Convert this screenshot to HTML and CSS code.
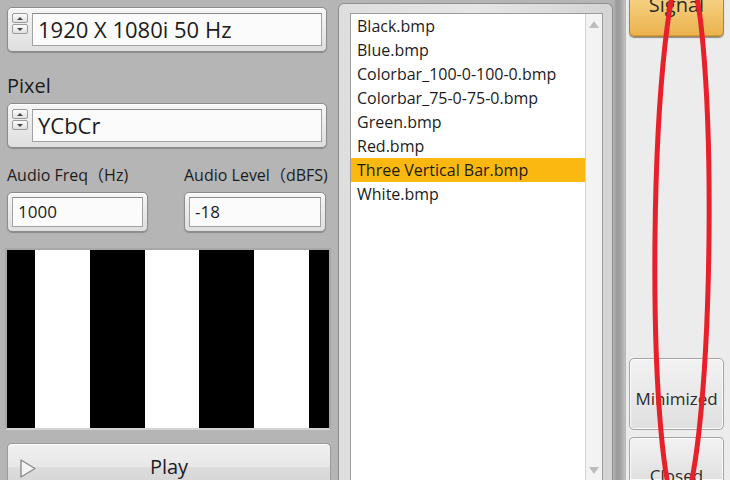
FILE: index.html
```html
<!DOCTYPE html>
<html lang="en">
<head>
    <meta charset="UTF-8">
    <meta name="viewport" content="width=device-width, initial-scale=1.0">
    <title>Signal Generator</title>
    <link rel="stylesheet" href="styles.css">
</head>
<body>

    <div class="left-panel">
        <div class="spin-field">
            <div class="spinner">
                <div class="spin-btn"><span class="tri-up"></span></div>
                <div class="spin-btn"><span class="tri-down"></span></div>
            </div>
            <div class="text-box">1920 X 1080i 50 Hz</div>
        </div>

        <div class="label">Pixel</div>
        <div class="spin-field second">
            <div class="spinner">
                <div class="spin-btn"><span class="tri-up"></span></div>
                <div class="spin-btn"><span class="tri-down"></span></div>
            </div>
            <div class="text-box">YCbCr</div>
        </div>

        <div class="audio-grid">
            <div class="small-label">Audio Freq（Hz)</div>
            <div class="small-label">Audio Level（dBFS)</div>
            <div class="num-field"><div class="num-box">1000</div></div>
            <div class="num-field"><div class="num-box">-18</div></div>
        </div>

        <div class="preview">
            <div class="bar black" style="width: 28px"></div>
            <div class="bar white" style="width: 55px"></div>
            <div class="bar black" style="width: 55px"></div>
            <div class="bar white" style="width: 54px"></div>
            <div class="bar black" style="width: 55px"></div>
            <div class="bar white" style="width: 55px"></div>
            <div class="bar black" style="width: 20px"></div>
        </div>

        <div class="play-btn">
            <svg class="play-icon" width="16" height="19" viewBox="0 0 16 19">
                <path d="M1 1 L15 9.5 L1 18 Z" fill="#f4f4f4" stroke="#8c8c8c" stroke-width="1.4" stroke-linejoin="round"/>
            </svg>
            <span class="play-text">Play</span>
        </div>
    </div>

    <div class="list-col">
        <div class="list-frame">
            <div class="file-list">
                <div class="items">
                    <div class="item">Black.bmp</div>
                    <div class="item">Blue.bmp</div>
                    <div class="item">Colorbar_100-0-100-0.bmp</div>
                    <div class="item">Colorbar_75-0-75-0.bmp</div>
                    <div class="item">Green.bmp</div>
                    <div class="item">Red.bmp</div>
                    <div class="item selected">Three Vertical Bar.bmp</div>
                    <div class="item">White.bmp</div>
                </div>
                <div class="scrollbar">
                    <span class="arrow-up"></span>
                    <span class="arrow-down"></span>
                </div>
            </div>
        </div>
    </div>

    <div class="splitter"></div>

    <div class="right-panel">
        <div class="btn signal">Signal</div>
        <div class="btn minimized">Minimized</div>
        <div class="btn closed">Closed</div>
    </div>

    <svg class="annotation" width="730" height="480" viewBox="0 0 730 480">
        <ellipse cx="682" cy="238" rx="27" ry="272" transform="rotate(0.6 682 238)" fill="none" stroke="#e8202a" stroke-width="5"/>
    </svg>

</body>
</html>
```

FILE: styles.css
```css
body {
    margin: 0;
    width: 730px;
    height: 480px;
    overflow: hidden;
    display: flex;
    position: relative;
    font-family: "Open Sans", "Noto Sans CJK SC", sans-serif;
    color: #1c1c1c;
    background: #b5b5b5;
}

/* left column */
.left-panel {
    width: 338px;
    height: 480px;
    overflow: hidden;
    flex-shrink: 0;
    box-sizing: border-box;
    padding: 7px 7px 0 7px;
    background: #b5b5b5;
}

.spin-field {
    width: 320px;
    height: 45px;
    box-sizing: border-box;
    border: 1px solid #8c8c8c;
    border-radius: 5px;
    background: linear-gradient(#f6f6f6, #dedede);
    box-shadow: inset 0 1px 0 #ffffff, 0 1px 1px #8a8a8a;
    padding: 5px 4px;
    display: flex;
    align-items: flex-start;
    gap: 4px;
}

.spin-field.second {
    margin-top: 5px;
}

.spinner {
    width: 16px;
    height: 21px;
    display: flex;
    flex-direction: column;
    gap: 1px;
}

.spin-btn {
    flex: 1;
    border: 1px solid #9a9a9a;
    border-radius: 2px;
    background: linear-gradient(#fbfbfb, #e2e2e2);
    display: flex;
    align-items: center;
    justify-content: center;
}

.tri-up,
.tri-down {
    width: 0;
    height: 0;
    border-left: 3px solid transparent;
    border-right: 3px solid transparent;
}

.tri-up {
    border-bottom: 3px solid #444;
}

.tri-down {
    border-top: 3px solid #444;
}

.text-box {
    flex: 1;
    height: 33px;
    box-sizing: border-box;
    border: 1px solid #a2a2a2;
    border-top-color: #8a8a8a;
    background: #fbfbfb;
    padding-left: 5px;
    font-size: 22px;
    line-height: 31px;
    white-space: nowrap;
}

.label {
    margin-top: 22px;
    font-size: 20px;
    line-height: 24px;
}

.audio-grid {
    margin-top: 17px;
    display: grid;
    grid-template-columns: 141px 142px;
    column-gap: 36px;
    row-gap: 7px;
}

.small-label {
    font-size: 16px;
    line-height: 20px;
    white-space: nowrap;
}

.num-field {
    height: 40px;
    box-sizing: border-box;
    border: 1px solid #8c8c8c;
    border-radius: 5px;
    background: linear-gradient(#f6f6f6, #dedede);
    box-shadow: inset 0 1px 0 #ffffff, 0 1px 1px #8a8a8a;
    padding: 4px;
}

.num-box {
    height: 30px;
    box-sizing: border-box;
    border: 1px solid #a2a2a2;
    border-top-color: #8a8a8a;
    background: #fbfbfb;
    padding-left: 5px;
    font-size: 17px;
    line-height: 28px;
}

.preview {
    margin-top: 16px;
    margin-left: -2px;
    width: 326px;
    height: 182px;
    box-sizing: border-box;
    border: 2px solid #a8a8a8;
    border-bottom-color: #d2d2d2;
    display: flex;
}

.bar.black {
    background: #000;
}

.bar.white {
    background: #fff;
}

.play-btn {
    margin-top: 13px;
    width: 324px;
    height: 37px;
    box-sizing: border-box;
    border: 1px solid #9a9a9a;
    border-bottom: none;
    border-radius: 5px 5px 0 0;
    background: linear-gradient(#f0f0f0 0%, #e8e8e8 62%, #dcdcdc 66%, #d8d8d8 100%);
    box-shadow: inset 0 1px 0 #ffffff;
    padding: 12px 12px 0 12px;
    display: grid;
    grid-template-columns: 1fr auto 1fr;
    align-items: start;
}

.play-icon {
    margin-top: 3px;
}

.play-text {
    font-size: 20px;
    line-height: 24px;
    margin-top: -1px;
}

/* file list */
.list-col {
    width: 275px;
    flex-shrink: 0;
    padding-top: 3px;
    display: flex;
    background: #b5b5b5;
}

.list-frame {
    flex: 1;
    border: 1px solid #8e8e8e;
    border-bottom: none;
    border-radius: 6px 6px 0 0;
    background: linear-gradient(to right, #dedede, #e6e6e6 50%, #d4d4d4);
    padding: 9px 9px 0 11px;
}

.file-list {
    height: 467px;
    box-sizing: border-box;
    border: 1px solid #9c9c9c;
    border-bottom: none;
    background: #fff;
    display: flex;
}

.items {
    flex: 1;
}

.item {
    height: 24px;
    padding-left: 6px;
    font-size: 16px;
    line-height: 24px;
    white-space: nowrap;
}

.item.selected {
    background: #fbb811;
}

.scrollbar {
    width: 17px;
    box-sizing: border-box;
    border-left: 1px solid #d4d4d4;
    background: #f3f3f3;
    display: flex;
    flex-direction: column;
    justify-content: space-between;
    align-items: center;
    padding: 7px 0 6px 0;
}

.arrow-up,
.arrow-down {
    width: 0;
    height: 0;
    border-left: 5px solid transparent;
    border-right: 5px solid transparent;
}

.arrow-up {
    border-bottom: 7px solid #bdbdbd;
}

.arrow-down {
    border-top: 7px solid #bdbdbd;
}

.splitter {
    width: 12px;
    flex-shrink: 0;
    background: linear-gradient(to right, #b4b4b4 0%, #9c9c9c 30%, #a0a0a0 60%, #c2c2c2 100%);
}

/* right buttons */
.right-panel {
    flex: 1;
    height: 480px;
    overflow: hidden;
    background: #ececec;
    border-left: 1px solid #b8b8b8;
    padding-left: 3px;
    display: flex;
    flex-direction: column;
}

.btn {
    width: 95px;
    flex-shrink: 0;
    box-sizing: border-box;
    border: 1px solid #a4a4a4;
    border-radius: 5px;
    background: linear-gradient(#f2f2f2, #e0e0e0);
    box-shadow: inset 0 0 0 1px #fafafa;
    text-align: center;
    font-size: 17px;
    line-height: 24px;
    color: #2c2c2c;
}

.btn.signal {
    margin-top: -10px;
    height: 47px;
    padding-top: 2px;
    font-size: 20px;
    border-color: #a88848;
    background: linear-gradient(#f7d78e, #ebb24c);
    box-shadow: inset 0 -1px 0 #d89a30, 0 1px 1px #8a8a8a;
}

.btn.minimized {
    margin-top: 321px;
    height: 72px;
    padding-top: 28px;
}

.btn.closed {
    margin-top: 7px;
    height: 43px;
    border-bottom: none;
    border-radius: 5px 5px 0 0;
    padding-top: 26px;
}

.annotation {
    position: absolute;
    top: 0;
    left: 0;
    pointer-events: none;
}
```
